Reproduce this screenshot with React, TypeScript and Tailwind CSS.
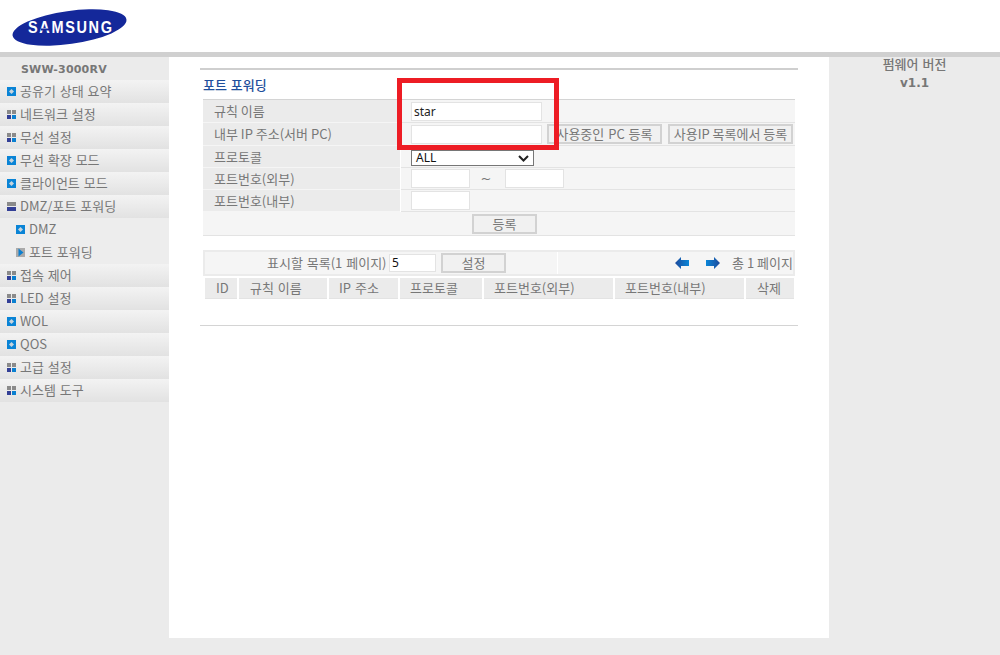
import React from 'react';

const font = { fontFamily: '"Noto Sans CJK KR", "DejaVu Sans", sans-serif' };
const latin = { fontFamily: '"DejaVu Sans", sans-serif' };
const inputFont = { fontFamily: '"Noto Sans", sans-serif' };

const Bullet = () => (
  <svg width="9" height="9" viewBox="0 0 9 9" className="shrink-0">
    <rect width="9" height="9" fill="#0a84d6" />
    <path d="M4.5 2 L7 4.5 L4.5 7 L2 4.5 Z" fill="#c8d4dc" />
  </svg>
);

const Squares = () => (
  <svg width="9" height="9" viewBox="0 0 9 9" className="shrink-0">
    <rect width="4" height="4" fill="#8a8a8a" />
    <rect x="5" width="4" height="4" fill="#8a8a8a" />
    <rect y="5" width="4" height="4" fill="#333f96" />
    <rect x="5" y="5" width="4" height="4" fill="#0a7fd0" />
  </svg>
);

const Open = () => (
  <svg width="9" height="9" viewBox="0 0 9 9" className="shrink-0">
    <rect width="9" height="4" fill="#8a8a8a" />
    <rect y="5" width="9" height="4" fill="#333f96" />
  </svg>
);

const Current = () => (
  <svg width="9" height="9" viewBox="0 0 9 9" className="shrink-0">
    <rect width="9" height="9" fill="#aaaaaa" />
    <path d="M2.5 0.5 L7.5 4.5 L2.5 8.5 Z" fill="#0a7fd0" />
  </svg>
);

const menu: { label: string; icon: React.ReactNode; sub?: boolean }[] = [
  { label: '공유기 상태 요약', icon: <Bullet /> },
  { label: '네트워크 설정', icon: <Squares /> },
  { label: '무선 설정', icon: <Squares /> },
  { label: '무선 확장 모드', icon: <Bullet /> },
  { label: '클라이언트 모드', icon: <Bullet /> },
  { label: 'DMZ/포트 포워딩', icon: <Open /> },
  { label: 'DMZ', icon: <Bullet />, sub: true },
  { label: '포트 포워딩', icon: <Current />, sub: true },
  { label: '접속 제어', icon: <Squares /> },
  { label: 'LED 설정', icon: <Squares /> },
  { label: 'WOL', icon: <Bullet /> },
  { label: 'QOS', icon: <Bullet /> },
  { label: '고급 설정', icon: <Squares /> },
  { label: '시스템 도구', icon: <Squares /> },
];

const Field = ({ value, w = 'w-[131px]' }: { value?: string; w?: string }) => (
  <div className={`${w} h-[19px] shrink-0 bg-white border border-[#e3e3e3] pl-[2px] text-[12px] leading-[17px] text-[#222]`} style={inputFont}>
    {value}
  </div>
);

const Btn = ({ label, w }: { label: string; w: string }) => (
  <div className={`${w} h-[20px] shrink-0 bg-[#f1f1f1] border-2 border-[#d2d2d2] flex items-center justify-center text-[13px] text-[#777] whitespace-nowrap`}>
    {label}
  </div>
);

const Row = ({ label, h, children }: { label: string; h: string; children: React.ReactNode }) => (
  <div className={`flex ${h}`}>
    <div className="w-[197px] bg-[#ebebeb] border-b border-[#f5f5f5] pl-[11px] text-[13px] leading-[21px] text-[#777] [word-spacing:0px]">{label}</div>
    <div className="flex-1 ml-[1px] bg-[#f5f5f5] border-b border-[#e3e3e3] pl-[10px] flex items-center">{children}</div>
  </div>
);

const columns = [
  { label: 'ID', w: 'w-[32px] pl-[11px]' },
  { label: '규칙 이름', w: 'w-[88px] pl-[11px]' },
  { label: 'IP 주소', w: 'w-[69px] pl-[10px]' },
  { label: '프로토콜', w: 'w-[82px] pl-[10px]' },
  { label: '포트번호(외부)', w: 'w-[129px] pl-[10px]' },
  { label: '포트번호(내부)', w: 'w-[129px] pl-[10px]' },
  { label: '삭제', w: 'w-[48px] pl-[11px]' },
];

export default function App() {
  return (
    <div className="h-[655px] w-[1000px] overflow-hidden bg-[#ebebeb] flex flex-col [word-spacing:1px]" style={font}>
      <header className="h-[52px] bg-white shrink-0">
        <svg width="140" height="52" viewBox="0 0 140 52">
          <ellipse cx="69.5" cy="27.5" rx="57.5" ry="16.5" transform="rotate(-8 69.5 27.5)" fill="#14289a" />
          <text
            transform="translate(28 33) scale(1 1.15)"
            fontFamily="Liberation Sans"
            fontWeight="700"
            fontSize="14.5"
            fill="#fff"
            textLength="84"
            lengthAdjust="spacing"
          >
            SAMSUNG
          </text>
          <rect x="41" y="28.5" width="8" height="2" fill="#14289a" />
        </svg>
      </header>
      <div className="h-[5px] bg-[#d0d0d0] shrink-0" />
      <div className="flex flex-1 min-h-0">
        <nav className="w-[169px] shrink-0">
          <div className="h-[23px] pl-[21px] text-[11px] font-bold leading-[25px] tracking-[0.2px] text-[#777]" style={latin}>SWW-3000RV</div>
          {menu.map((m) => (
            <div
              key={m.label}
              className={
                m.sub
                  ? 'h-[23px] flex items-center gap-[4px] pl-[16px] text-[13px] text-[#777] bg-[#ededed]'
                  : 'h-[23px] flex items-center gap-[4px] pl-[7px] text-[13px] text-[#777] bg-gradient-to-b from-[#f3f3f3] to-[#e2e2e2]'
              }
            >
              {m.icon}
              <span className="-mt-[2px]">{m.label}</span>
            </div>
          ))}
        </nav>

        <main className="w-[660px] h-[581px] bg-white relative shrink-0 pl-[31px] pt-[11px]">
          <div className="w-[598px]">
            <div className="h-[2px] bg-[#cfcfcf]" />
            <div className="h-[29px] ml-[3px] pt-[6px] text-[13px] font-medium leading-[18px] text-[#1f4f9c]">포트 포워딩</div>
            <div className="h-[1px] ml-[3px] w-[592px] bg-[#d4d4d4]" />
            <div className="ml-[3px] w-[592px]">
              <Row label="규칙 이름" h="h-[23px]"><Field value="star" /></Row>
              <Row label="내부 IP 주소(서버 PC)" h="h-[23px]">
                <Field />
                <div className="ml-[5px]"><Btn label="사용중인 PC 등록" w="w-[115px]" /></div>
                <div className="ml-[6px] [word-spacing:0px]"><Btn label="사용IP 목록에서 등록" w="w-[125px]" /></div>
              </Row>
              <Row label="프로토콜" h="h-[22px]">
                <div className="w-[123px] h-[16px] mt-[3px] bg-white border border-[#767676] pl-[4px] flex items-center justify-between pr-[4px] text-[12px] text-[#111]" style={inputFont}>
                  <span>ALL</span>
                  <svg width="11" height="7" viewBox="0 0 11 7"><path d="M1 1 L5.5 5.5 L10 1" stroke="#222" strokeWidth="2" fill="none" /></svg>
                </div>
              </Row>
              <Row label="포트번호(외부)" h="h-[22px]">
                <Field w="w-[59px]" />
                <span className="w-[32px] text-center text-[13px] text-[#777]" style={latin}>~</span>
                <span className="w-[3px]" />
                <Field w="w-[59px]" />
              </Row>
              <Row label="포트번호(내부)" h="h-[22px]"><Field w="w-[59px]" /></Row>
              <div className="h-[24px] bg-[#f5f5f5] border-b border-[#e3e3e3] flex items-center justify-center pl-[11px]">
                <Btn label="등록" w="w-[65px]" />
              </div>

              <div className="mt-[14px] h-[26px] bg-[#f5f5f5] border-2 border-[#ebebeb] flex items-center text-[13px] text-[#777]">
                <div className="w-[353px] h-full border-r border-white flex items-center pl-[62px]">
                  <span className="w-[122px] shrink-0 whitespace-nowrap">표시할 목록(1 페이지)</span>
                  <div className="w-[47px] h-[18px] shrink-0 bg-white border border-[#e3e3e3] pl-[2px] text-[12px] leading-[16px] text-[#111]" style={inputFont}>5</div>
                  <div className="ml-[5px] shrink-0"><Btn label="설정" w="w-[65px]" /></div>
                </div>
                <div className="flex-1 flex items-center justify-end whitespace-nowrap">
                  <svg width="14" height="12" viewBox="0 0 14 12" className="mr-[17px]">
                    <defs>
                      <linearGradient id="arrowL" x1="0" x2="1" y1="0" y2="0">
                        <stop offset="0" stopColor="#1d4a9c" />
                        <stop offset="1" stopColor="#0a86d8" />
                      </linearGradient>
                      <linearGradient id="arrowR" x1="0" x2="1" y1="0" y2="0">
                        <stop offset="0" stopColor="#0a86d8" />
                        <stop offset="1" stopColor="#1d4a9c" />
                      </linearGradient>
                    </defs>
                    <path d="M0 6 L6 0 V3 H14 V9 H6 V12 Z" fill="url(#arrowL)" />
                  </svg>
                  <svg width="14" height="12" viewBox="0 0 14 12" className="mr-[12px]">
                    <path d="M14 6 L8 0 V3 H0 V9 H8 V12 Z" fill="url(#arrowR)" />
                  </svg>
                  <span className="-mt-[1px] [word-spacing:0px]">총 1 페이지</span>
                </div>
              </div>

              <div className="flex h-[21px] mt-[2px] ml-[2px] gap-[2px]">
                {columns.map((c) => (
                  <div key={c.label} className={`${c.w} bg-[#ebebeb] border-b border-[#e3e3e3] text-[13px] leading-[20px] text-[#777] whitespace-nowrap`}>
                    {c.label}
                  </div>
                ))}
              </div>
            </div>
            <div className="mt-[26px] h-[1px] bg-[#d4d4d4]" />
          </div>
          <div className="absolute left-[228px] top-[21px] w-[162px] h-[72px] border-[5px] border-[#ed1c24]" />
        </main>

        <aside className="flex-1 text-center text-[13px] font-medium text-[#777]">
          <div className="h-[17px] leading-[14px]">펌웨어 버전</div>
          <div className="text-[12px] font-bold leading-[19px]" style={latin}>v1.1</div>
        </aside>
      </div>
    </div>
  );
}
